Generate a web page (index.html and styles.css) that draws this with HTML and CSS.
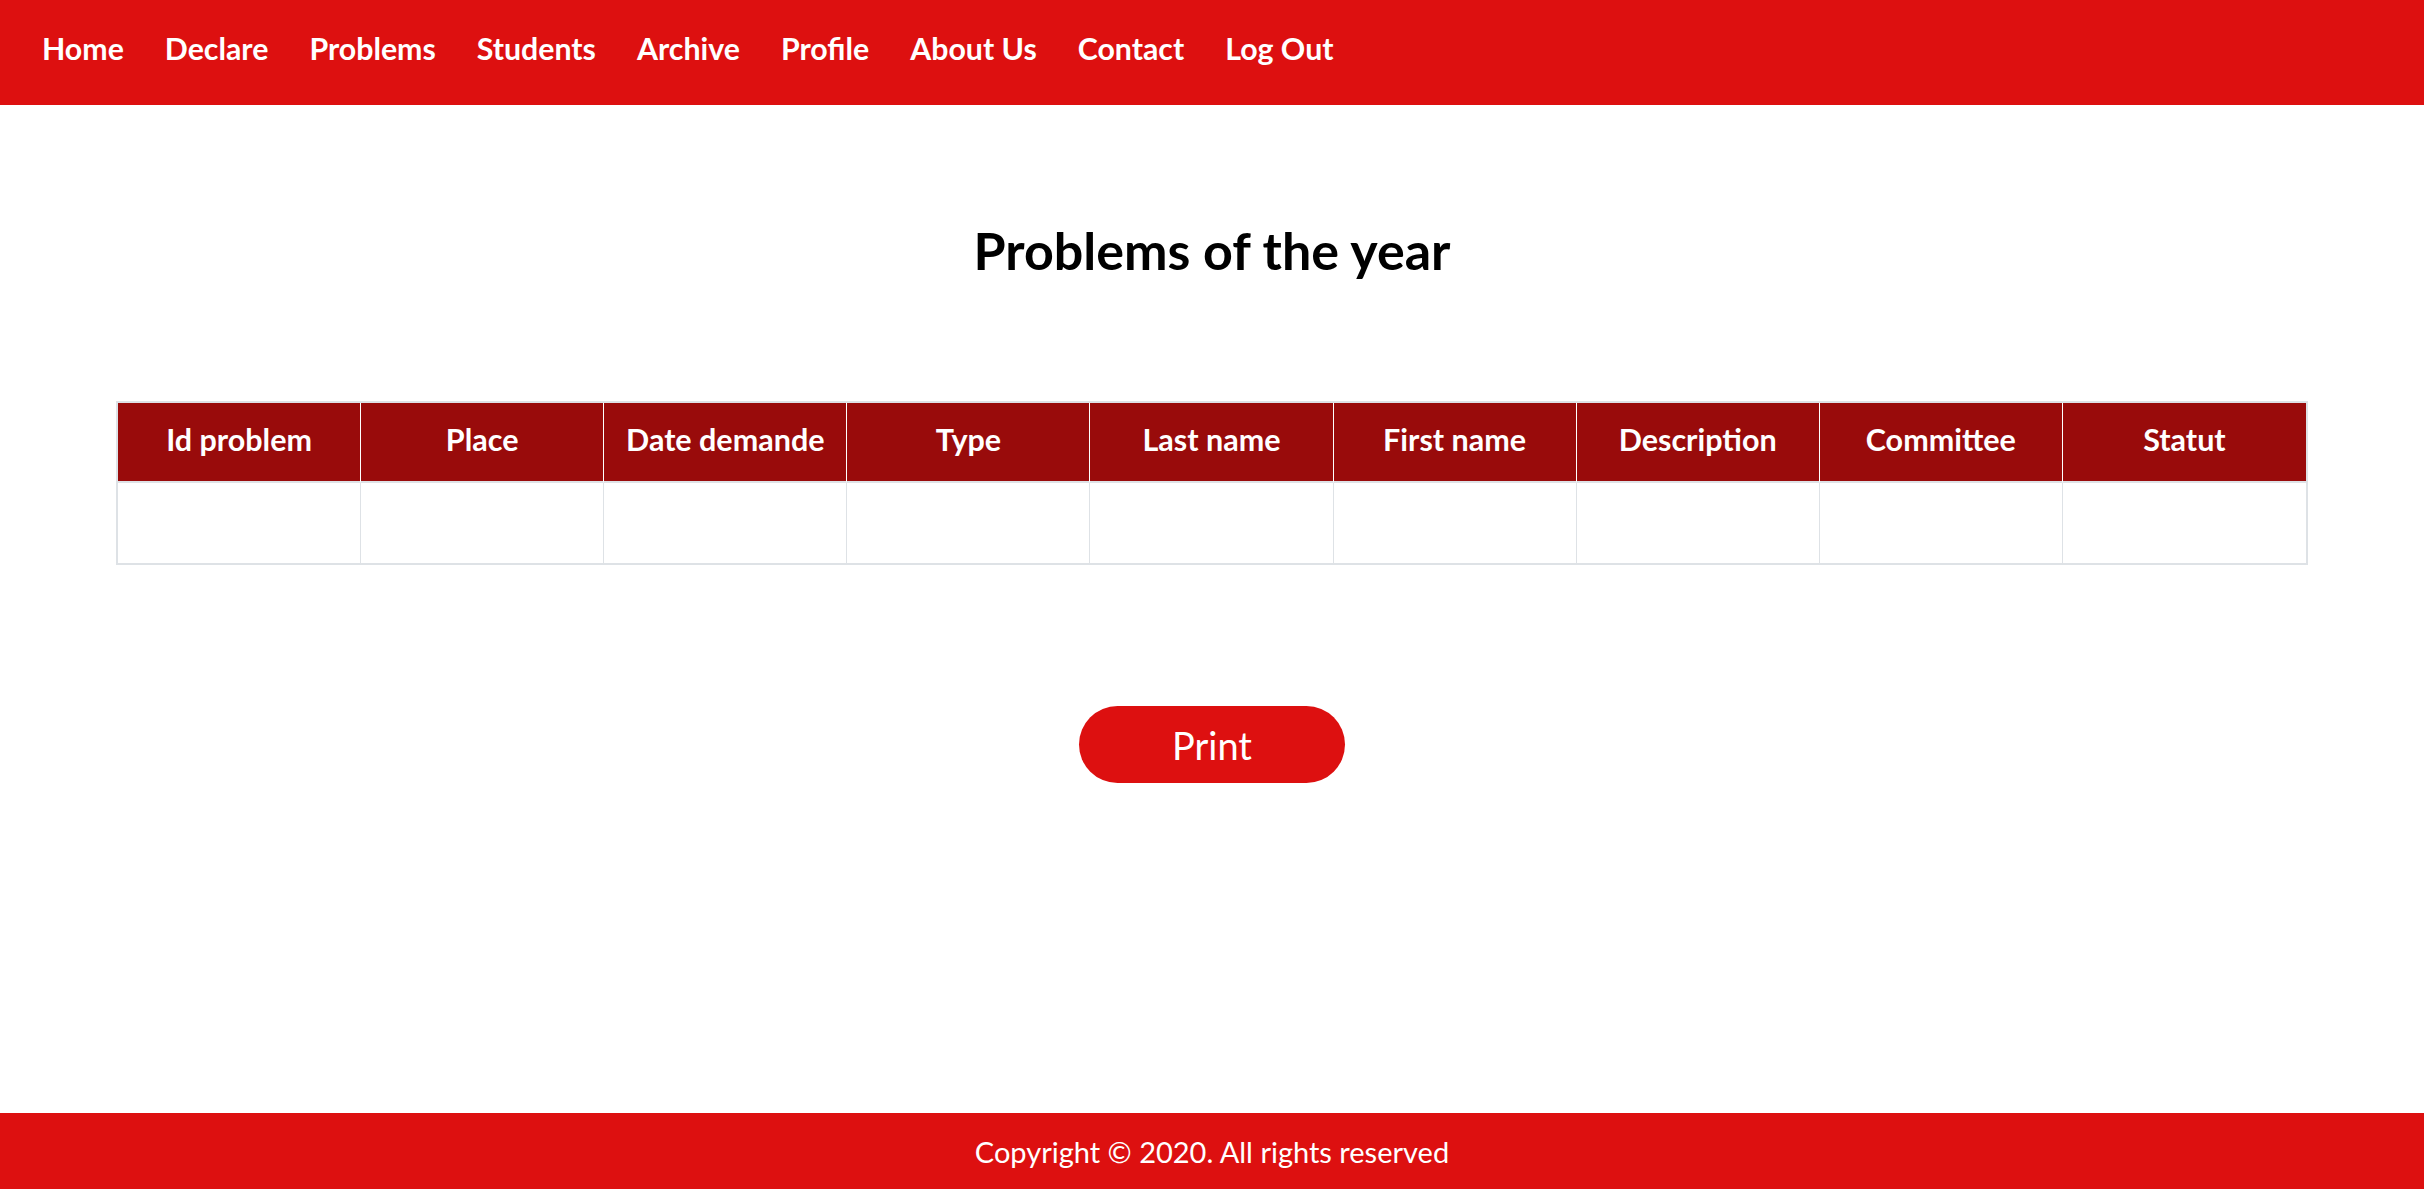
FILE: index.html
```html
<!DOCTYPE html>
<html lang="en">
<head>
<meta charset="utf-8">
<title>Problems of the year</title>
<link rel="stylesheet" href="styles.css">
</head>
<body>
<div class="page">
  <header class="topbar">
    <nav class="nav">
      <a href="#">Home</a>
      <a href="#">Declare</a>
      <a href="#">Problems</a>
      <a href="#">Students</a>
      <a href="#">Archive</a>
      <a href="#">Profile</a>
      <a href="#">About Us</a>
      <a href="#">Contact</a>
      <a href="#">Log Out</a>
    </nav>
  </header>
  <main class="content">
    <h1 class="title">Problems of the year</h1>
    <table class="problems">
      <thead>
        <tr>
          <th>Id problem</th>
          <th>Place</th>
          <th>Date demande</th>
          <th>Type</th>
          <th>Last name</th>
          <th>First name</th>
          <th>Description</th>
          <th>Committee</th>
          <th>Statut</th>
        </tr>
      </thead>
      <tbody>
        <tr>
          <td></td><td></td><td></td><td></td><td></td><td></td><td></td><td></td><td></td>
        </tr>
      </tbody>
    </table>
    <div class="actions">
      <button class="print-btn" type="button">Print</button>
    </div>
  </main>
  <footer class="footer">Copyright © 2020. All rights reserved</footer>
</div>
</body>
</html>
```

FILE: styles.css
```css
* { box-sizing: border-box; }
html, body { margin: 0; padding: 0; }
body {
  font-family: Lato, "Open Sans", sans-serif;
  background: #fff;
  color: #000;
}
.page {
  min-height: 100vh;
  display: flex;
  flex-direction: column;
}
.topbar {
  height: 105px;
  background: #dd1010;
  padding: 33px 0 0 42px;
}
.nav {
  display: flex;
  gap: 41px;
}
.nav a {
  color: #fff;
  text-decoration: none;
  font-weight: 700;
  font-size: 30.3px;
  line-height: 1;
}
.content {
  flex: 1;
  display: flex;
  flex-direction: column;
  align-items: center;
}
.title {
  margin: 119px 0 0;
  font-size: 52px;
  line-height: 1;
  font-weight: 700;
  text-align: center;
}
.problems {
  margin-top: 125px;
  width: calc(100% - 232px);
  table-layout: fixed;
  border-collapse: separate;
  border-spacing: 0;
  border: 2px solid #dee2e6;
}
.problems th {
  background: #990b0b;
  color: #fff;
  font-size: 30.5px;
  font-weight: 700;
  line-height: 72px;
  padding: 0 0 6px;
  text-align: center;
  white-space: nowrap;
  border-right: 1px solid #fff;
  border-bottom: 2px solid #dee2e6;
}
.problems td {
  padding: 40px 0;
  border-right: 1px solid #dee2e6;
}
.problems th:last-child,
.problems td:last-child { border-right: none; }
.actions {
  margin-top: 141px;
  display: flex;
  justify-content: center;
}
.print-btn {
  width: 266px;
  height: 77px;
  border: none;
  border-radius: 39px;
  background: #dd1010;
  color: #fff;
  font-family: Lato, "Open Sans", sans-serif;
  font-size: 38px;
  line-height: 1;
  padding: 0;
  cursor: pointer;
}
.footer {
  height: 76px;
  background: #dd1010;
  color: #fff;
  font-size: 29px;
  line-height: 1;
  display: flex;
  align-items: center;
  justify-content: center;
}
```
